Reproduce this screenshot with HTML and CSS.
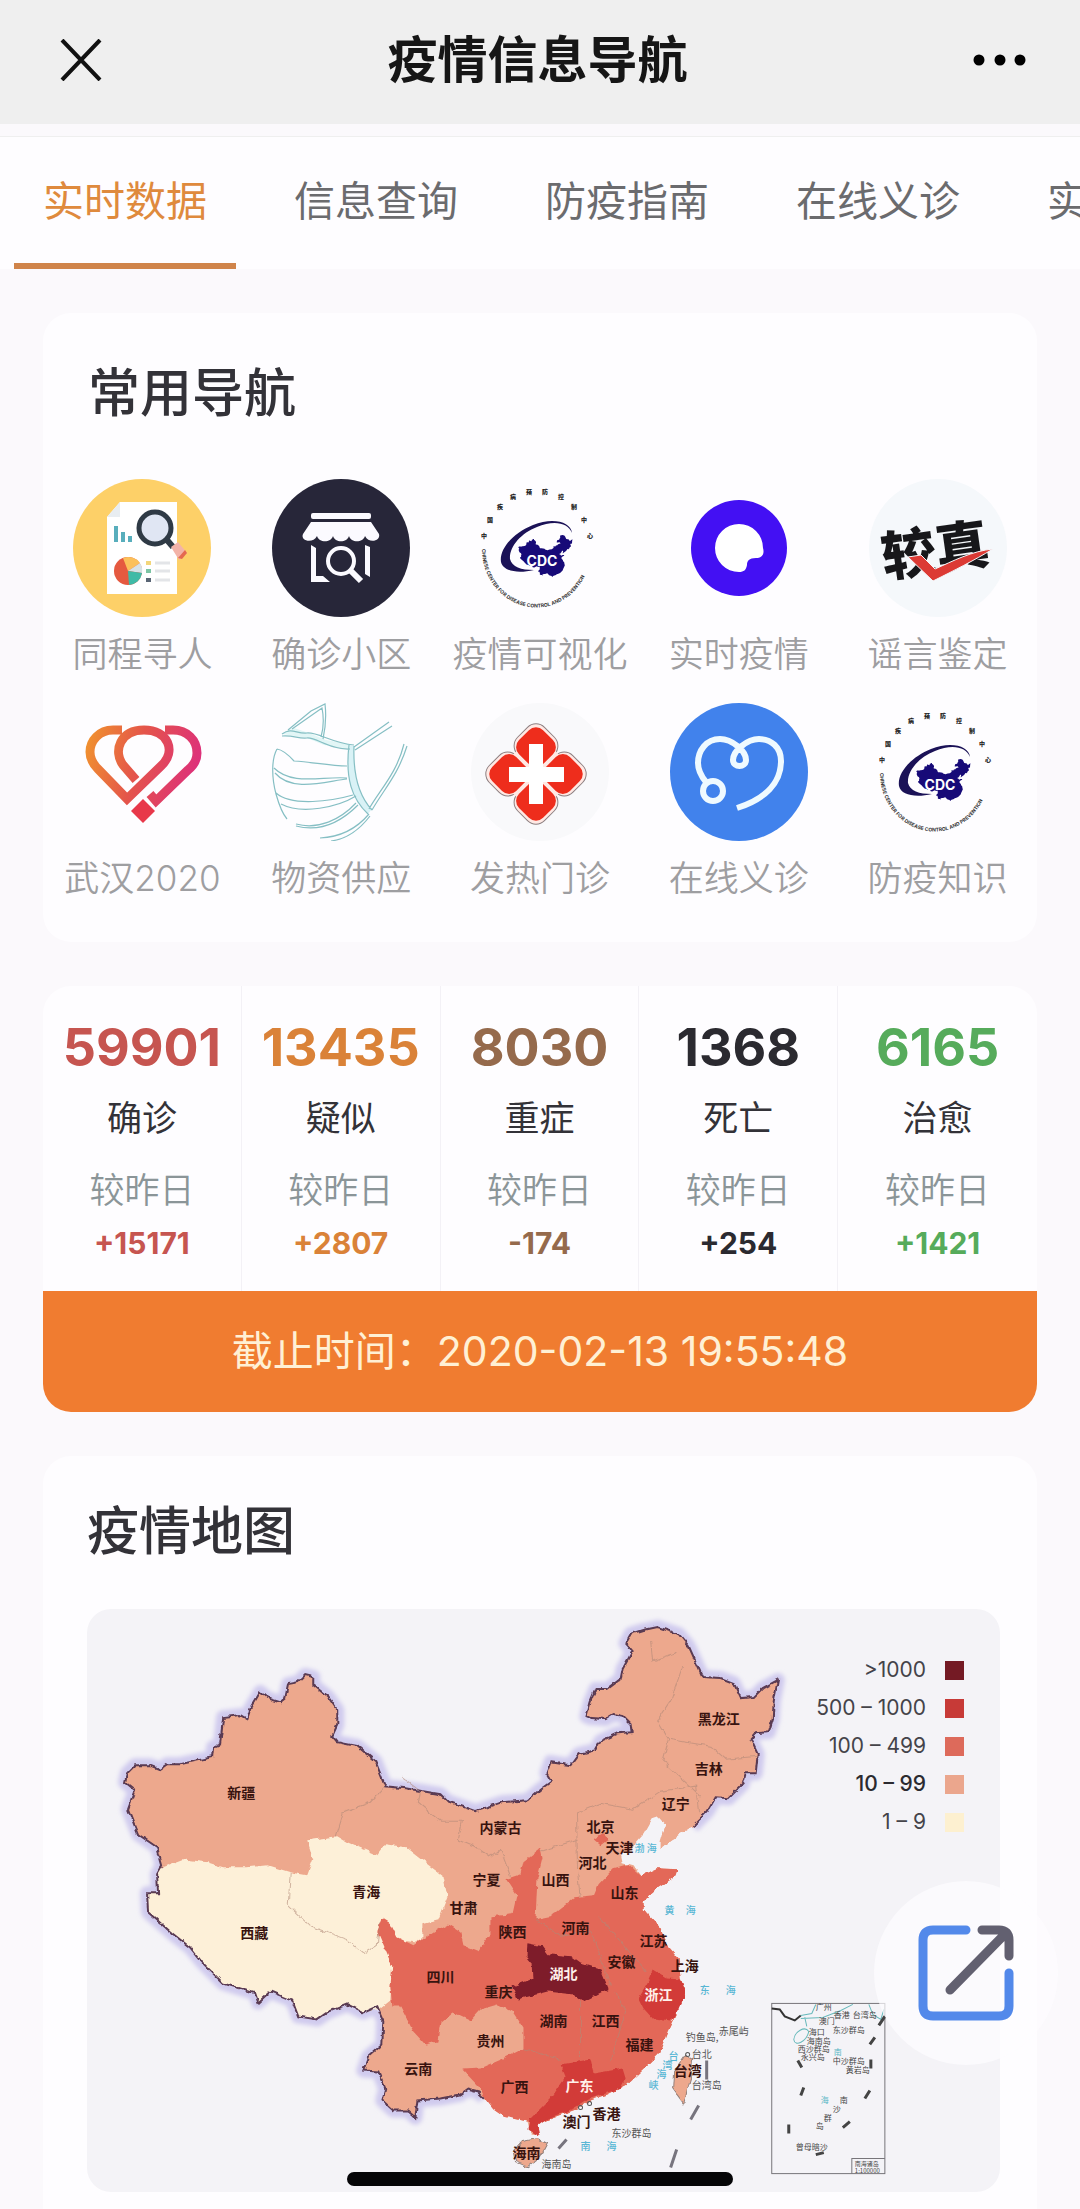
FILE: index.html
```html
<!DOCTYPE html>
<html lang="zh-CN">
<head>
<meta charset="utf-8">
<meta name="viewport" content="width=device-width, initial-scale=1">
<title>疫情信息导航</title>
<link rel="stylesheet" href="styles.css">
</head>
<body>
<svg class="defs" aria-hidden="true">
  <defs>
    <path id="china" d="M692 1825L673 1837L660 1848L660 1840L665 1823L658 1815L652 1817L643 1833L635 1842L632 1850L620 1852L622 1862L633 1865L640 1875L657 1867L677 1868L675 1875L657 1887L643 1900L643 1908L660 1927L665 1942L678 1957L680 1977L685 1990L673 2017L667 2030L658 2053L643 2068L627 2083L607 2093L587 2100L577 2107L550 2117L537 2123L538 2133L530 2132L527 2120L503 2115L493 2108L485 2098L478 2091L467 2088L460 2093L440 2097L417 2099L415 2116L407 2109L393 2109L382 2099L385 2087L378 2070L363 2069L368 2055L382 2043L383 2019L377 2005L363 2011L347 2003L327 2011L317 2018L298 2015L292 1999L270 1990L258 2001L255 1992L223 1982L202 1961L190 1946L172 1932L148 1911L147 1892L158 1892L157 1873L162 1864L157 1846L138 1833L128 1808L135 1789L125 1781L127 1772L135 1764L150 1764L160 1768L167 1763L180 1763L212 1756L213 1746L220 1743L223 1716L240 1714L247 1718L250 1708L260 1691L267 1697L280 1701L285 1697L288 1683L298 1681L305 1674L313 1676L313 1684L328 1696L337 1709L337 1724L332 1735L337 1741L357 1745L375 1760L385 1785L405 1787L440 1793L447 1800L475 1810L502 1801L527 1799L540 1788L551 1780L546 1772L550 1761L570 1764L578 1753L595 1749L600 1740L617 1732L631 1731L630 1723L622 1715L613 1713L605 1718L590 1717L586 1715L590 1700L595 1688L607 1688L620 1678L622 1668L632 1650L625 1642L630 1633L643 1629L657 1626L678 1633L688 1645L702 1676L720 1677L733 1682L740 1697L753 1696L762 1687L777 1679L773 1700L772 1718L768 1731L755 1732L750 1738L757 1753L755 1772L745 1772L742 1783L728 1797L715 1796L707 1810Z"/>
    <symbol id="cdc" viewBox="0 0 138 138">
      <g class="cdc-ring">
        <text x="13" y="59">中</text><text x="19" y="43">国</text><text x="29" y="30">疾</text><text x="42" y="20">病</text><text x="58" y="15">预</text><text x="74" y="15">防</text><text x="90" y="20">控</text><text x="103" y="30">制</text><text x="113" y="43">中</text><text x="119" y="59">心</text>
      </g>
      <path id="cdc-arc" d="M11 70A54 58 0 0 0 120 70" fill="none"/>
      <text class="cdc-en"><textPath href="#cdc-arc">CHINESE CENTER FOR DISEASE CONTROL AND PREVENTION</textPath></text>
      <path fill="#1b1257" d="M101 54C100 43 82 38 62 46C42 54 28 70 30 83C32 92 46 95 63 91C50 91 41 88 39 80C38 68 50 54 66 48C82 41 97 43 101 54Z"/>
      <use href="#china" fill="#170a78" transform="translate(37 -79) scale(.083)"/>
      <text class="cdc-name" x="71" y="87">CDC</text>
    </symbol>
    <linearGradient id="heart" gradientUnits="userSpaceOnUse" x1="14" y1="40" x2="126" y2="70">
      <stop offset="0" stop-color="#f09030"/><stop offset=".45" stop-color="#e4554a"/><stop offset="1" stop-color="#dd2f7c"/>
    </linearGradient>
    <filter id="rough" x="-5%" y="-5%" width="110%" height="110%">
      <feTurbulence type="fractalNoise" baseFrequency=".14" numOctaves="2" seed="4"/>
      <feDisplacementMap in="SourceGraphic" scale="5" xChannelSelector="R" yChannelSelector="G"/>
    </filter>
    <filter id="glow"><feGaussianBlur stdDeviation="2"/></filter>
  </defs>
</svg>

<header class="topbar">
  <button class="icon-btn" type="button" aria-label="关闭"><svg width="42" height="42" viewBox="0 0 42 42"><path d="M2 1L40 41M40 1L2 41" stroke="#111" stroke-width="4" fill="none"/></svg></button>
  <h1>疫情信息导航</h1>
  <button class="icon-btn" type="button" aria-label="更多"><svg width="54" height="12" viewBox="0 0 54 12"><circle cx="6" cy="6" r="5.5"/><circle cx="27" cy="6" r="5.5"/><circle cx="47" cy="6" r="5.5"/></svg></button>
</header>

<nav class="tabs" aria-label="栏目">
  <a class="active" href="#data">实时数据</a>
  <a href="#query">信息查询</a>
  <a href="#guide">防疫指南</a>
  <a href="#clinic">在线义诊</a>
  <a href="#live">实时动态</a>
</nav>

<main>
  <section class="card shortcuts">
    <h2>常用导航</h2>
    <ul class="grid">
      <li><a href="#find">
        <svg viewBox="0 0 138 138"><circle cx="69" cy="69" r="69" fill="#fdd068"/><path d="M47 23H104V115H34V38Z" fill="#fff"/><path d="M47 23V38H34Z" fill="#e8edf1"/><path d="M41 47h4v16h-4zM48 53h4v10h-4zM55 57h4v6h-4z" fill="#58aebc"/><circle cx="55" cy="92" r="14" fill="#e5593f"/><path d="M55 92L50 79A14 14 0 0 1 67 84Z" fill="#fbc05a"/><path d="M55 92L67 84A14 14 0 0 1 69 94Z" fill="#d7e2e6"/><path d="M55 92L69 94A14 14 0 0 1 56 106Z" fill="#3fbaa6"/><path d="M73 82h5v4h-5z" fill="#f3d67a"/><path d="M73 90h5v4h-5z" fill="#7cc4a4"/><path d="M73 99h5v4h-5z" fill="#596574"/><path d="M82 84H97M82 92H97M82 101H97" stroke="#e3e5e8" stroke-width="3"/><path d="M94 61L100 68" stroke="#2f3a45" stroke-width="6"/><path d="M98 68L105 63L114 74L106 81Z" fill="#f3b3a8"/><path d="M109 80L114 74L112 71L105 79Z" fill="#e5694f"/><circle cx="82" cy="49" r="16" fill="#e0e6f3" stroke="#2f3a45" stroke-width="5"/></svg>
        <span>同程寻人</span></a></li>
      <li><a href="#area">
        <svg viewBox="0 0 138 138"><circle cx="69" cy="69" r="69" fill="#272639"/><g fill="#fbfaff"><rect x="39" y="34" width="60" height="6" rx="2"/><path d="M39 43H99L107 55C109 62 97 65 93 57C91 64 79 64 77 57C75 64 63 64 61 57C59 64 47 64 45 57C41 65 28 62 31 55Z"/><path d="M39 66L44 69V97H51L58 103H39ZM93 66L98 68V98L93 95Z"/></g><circle cx="69" cy="82" r="13" fill="none" stroke="#fbfaff" stroke-width="4"/><path d="M78 91L89 102" stroke="#fbfaff" stroke-width="6"/></svg>
        <span>确诊小区</span></a></li>
      <li><a href="#visual"><svg viewBox="0 0 138 138"><use href="#cdc"/></svg><span>疫情可视化</span></a></li>
      <li><a href="#live">
        <svg viewBox="0 0 138 138"><circle cx="69" cy="69" r="48" fill="#4310f3"/><path d="M93 69C95 76 91 79 86 79C79 79 77 82 77 86C76 91 74 93 69 93A24 24 0 0 1 69 45A24 24 0 0 1 93 69Z" fill="#fff"/></svg>
        <span>实时疫情</span></a></li>
      <li><a href="#rumor">
        <svg viewBox="0 0 138 138"><circle cx="69" cy="69" r="69" fill="#f5f8fb"/><text class="brand" x="66" y="91" transform="rotate(-8 66 70)">较真</text><path d="M39 78L52 76L66 90C84 82 103 72 124 70C104 82 86 91 64 102Z" fill="#dc3a34" stroke="#f5f8fb" stroke-width="1"/></svg>
        <span>谣言鉴定</span></a></li>
      <li><a href="#wuhan">
        <svg viewBox="0 0 138 138"><g fill="none" stroke="url(#heart)" stroke-width="9"><path d="M49 27H40C26 27 17 38 17 49C17 56 20 61 25 66L54 96L88 63C104 48 95 27 71 27C47 27 40 48 50 62L63 77"/><path d="M92 27H100C114 27 124 37 124 50C124 58 120 63 115 67L83 98L77 91"/></g><path d="M70 96L82 108L70 120L58 108Z" fill="#e8384a"/></svg>
        <span>武汉2020</span></a></li>
      <li><a href="#supply">
        <svg viewBox="0 0 138 138"><path d="M77 42C73 76 80 96 96 111L100 106C86 92 81 70 82 43Z" fill="#d9f2f6"/><path d="M16 27L22 25L37 30L54 37L78 41V46L52 42L35 35L10 31Z" fill="#e2f6f6"/><g fill="none" stroke="#86bfc4" stroke-width="1.2"><path d="M10 31C20 24 24 31 35 30S60 40 82 42M10 33C22 32 26 36 35 35S58 47 78 46M16 27L39 8L53 1Q55 18 51 36M20 26L50 5Q53 20 49 34M77 42C73 76 80 96 96 111M82 43C81 70 86 92 100 107M82 44L117 19M83 47L120 23M97 106C107 88 125 70 132 41M100 107C112 86 126 72 135 43"/><path d="M5 46Q12 47 22 58C40 59 58 63 75 63M2 65C20 83 50 73 75 75M3 70C20 90 55 78 75 76M4 90C20 104 60 98 81 92M9 101C30 112 66 104 84 93M24 121C46 127 68 117 84 100M24 123C50 130 70 118 86 102M48 135C70 134 86 124 97 111M59 138C76 136 88 126 98 113M5 46C0 55-1 72 4 91Q9 109 15 116"/></g></svg>
        <span>物资供应</span></a></li>
      <li><a href="#fever">
        <svg viewBox="0 0 138 138"><circle cx="69" cy="69" r="69" fill="#f9f9fb"/><g transform="translate(65 71) rotate(45)"><g fill="#ffe9e4" stroke="#8c7f80"><rect x="-39" y="-39" width="38" height="38" rx="12"/><rect x="1" y="-39" width="38" height="38" rx="12"/><rect x="-39" y="1" width="38" height="38" rx="12"/><rect x="1" y="1" width="38" height="38" rx="12"/></g><rect x="-30" y="-30" width="60" height="60" fill="#ffe9e4"/><g fill="#ee2d1c"><rect x="-36" y="-36" width="34" height="34" rx="10"/><rect x="2" y="-36" width="34" height="34" rx="10"/><rect x="-36" y="2" width="34" height="34" rx="10"/><rect x="2" y="2" width="34" height="34" rx="10"/></g></g><path d="M58 41H72V64H93V79H72V101H58V79H38V64H58Z" fill="#fff"/></svg>
        <span>发热门诊</span></a></li>
      <li><a href="#clinic">
        <svg viewBox="0 0 138 138"><circle cx="69" cy="69" r="69" fill="#4182ec"/><g fill="none" stroke="#effaff" stroke-width="6"><path d="M67 105C95 96 111 80 111 58C111 44 101 36 89 36C77 36 63 48 63 57C63 65 76 65 76 57C76 48 62 36 50 36C36 36 28 48 28 60C28 68 31 73 36 79"/><circle cx="43" cy="88" r="10"/></g></svg>
        <span>在线义诊</span></a></li>
      <li><a href="#knowledge"><svg viewBox="0 0 138 138"><use href="#cdc"/></svg><span>防疫知识</span></a></li>
    </ul>
  </section>

  <section class="card stats" id="data">
    <ul>
      <li class="red"><strong>59901</strong><span>确诊</span><small>较昨日</small><em>+15171</em></li>
      <li class="orange"><strong>13435</strong><span>疑似</span><small>较昨日</small><em>+2807</em></li>
      <li class="brown"><strong>8030</strong><span>重症</span><small>较昨日</small><em>-174</em></li>
      <li class="black"><strong>1368</strong><span>死亡</span><small>较昨日</small><em>+254</em></li>
      <li class="green"><strong>6165</strong><span>治愈</span><small>较昨日</small><em>+1421</em></li>
    </ul>
    <p>截止时间：<time datetime="2020-02-13T19:55:48">2020-02-13 19:55:48</time></p>
  </section>

  <section class="card map">
    <h2>疫情地图</h2>
    <div class="panel">
      <svg viewBox="87 1608 912 582" role="img" aria-label="疫情地图">
        <use href="#china" class="halo" filter="url(#glow)"/>
        <g filter="url(#rough)">
          <use href="#china" fill="#eda88d"/>
          <path class="l0" d="M162 1866L183 1858L207 1861L223 1866L247 1866L267 1864L290 1871L307 1874L313 1858L307 1839L337 1835L347 1841L377 1854L385 1843L405 1846L423 1860L443 1875L447 1896L438 1919L422 1923L422 1942L407 1940L387 1946L392 1965L390 1999L380 2007L363 2011L347 2003L327 2011L317 2018L298 2015L292 1999L270 1990L258 2001L255 1992L223 1982L202 1961L190 1946L172 1932L148 1911L147 1892L158 1892L157 1873Z"/>
          <path class="l2" d="M382 1917L390 1922L397 1936L413 1944L437 1929L447 1923L460 1931L463 1944L478 1950L483 1943L490 1933L490 1915L512 1913L516 1895L505 1878L520 1873L523 1860L540 1847L542 1857L537 1877L535 1918L550 1915L573 1897L593 1895L598 1883L613 1867L627 1863L640 1875L657 1867L677 1868L675 1875L657 1887L643 1900L643 1908L660 1927L665 1942L678 1957L680 1977L685 1990L673 2017L667 2030L658 2053L643 2068L627 2083L607 2093L587 2100L577 2107L550 2117L537 2123L527 2120L503 2115L493 2108L485 2098L480 2087L462 2068L480 2067L503 2057L523 2047L523 2027L512 2010L497 2003L480 2008L470 2019L453 2011L440 2022L437 2040L425 2043L413 2030L400 2005L392 2005L390 1985L392 1965L377 1930Z"/>
          <path class="l4" d="M527 1942L542 1945L548 1953L570 1955L580 1962L600 1968L608 1987L583 2000L573 1993L547 1990L517 1998L512 1985L533 1977L532 1962L526 1955Z"/>
          <path class="l3" d="M653 1968L667 1977L680 1978L685 1990L678 2007L670 2020L653 2018L643 2007L638 1997L648 1980Z"/>
          <path class="l3" d="M560 2063L590 2058L593 2072L622 2067L625 2077L620 2087L587 2098L573 2107L547 2117L537 2125L539 2135L528 2128L530 2117L550 2097L565 2075Z"/>
          <path class="l2" d="M593 1838L602 1832L608 1838L600 1844Z"/>
          <path class="l1" d="M522 2140L537 2137L547 2142L540 2155L527 2165L515 2160L513 2150Z"/>
          <path class="l1" d="M685 2053L692 2057L690 2077L683 2102L672 2087L673 2070Z"/>
          <path class="lines" d="M335 1835L342 1812L370 1801L385 1785M290 1871L288 1904L310 1925L347 1938L363 1952L377 1943L380 1920M400 1775L420 1790L418 1802L440 1820L462 1820L458 1838L475 1845M475 1845L490 1856L500 1848L510 1875M580 1900L577 1870L576 1812L600 1802L632 1808L660 1790L695 1785L698 1812M682 1665L670 1700L657 1720L668 1738L662 1760L700 1795M668 1738L710 1745L725 1758L757 1755M650 1640L652 1660L675 1652M535 1918L560 1935L590 1930L598 1950L610 1985M598 1915L620 1940L645 1970M580 2000L580 2055M523 2047L560 2058M615 1990L625 2010L610 2060M540 1850L578 1838"/>
          <use href="#china" class="border"/>
        </g>
        <g class="sea-lines"><path d="M706 2059V2078M690 2118L698 2104M558 2147L566 2138M670 2166L676 2148"/></g>
        <g class="places">
          <text x="241" y="1797">新疆</text><text x="366" y="1896">青海</text><text x="254" y="1937">西藏</text><text x="440" y="1981">四川</text><text x="418" y="2073">云南</text><text x="500" y="1832">内蒙古</text><text x="600" y="1831">北京</text><text x="619" y="1852">天津</text><text x="592" y="1867">河北</text><text x="486" y="1884">宁夏</text><text x="555" y="1884">山西</text><text x="624" y="1897">山东</text><text x="718" y="1723">黑龙江</text><text x="708" y="1773">吉林</text><text x="675" y="1808">辽宁</text><text x="463" y="1912">甘肃</text><text x="512" y="1936">陕西</text><text x="575" y="1932">河南</text><text x="653" y="1945">江苏</text><text x="621" y="1966">安徽</text><text x="684" y="1970">上海</text><text x="498" y="1996">重庆</text><text x="553" y="2025">湖南</text><text x="605" y="2025">江西</text><text x="490" y="2045">贵州</text><text x="639" y="2049">福建</text><text x="514" y="2090">广西</text><text x="687" y="2075">台湾</text><text x="576" y="2125">澳门</text><text x="606" y="2117">香港</text><text x="526" y="2156">海南</text>
          <text class="on-dark" x="563" y="1978">湖北</text><text class="on-dark" x="658" y="1999">浙江</text><text class="on-dark" x="579" y="2089">广东</text>
        </g>
        <g class="isles"><text x="685" y="2040">钓鱼岛,</text><text x="718" y="2034">赤尾屿</text><text x="691" y="2057">台北</text><text x="691" y="2087">台湾岛</text><text x="611" y="2135">东沙群岛</text><text x="541" y="2166">海南岛</text></g>
        <g class="seas"><text x="634" y="1851">渤 海</text><text x="664" y="1913">黄</text><text x="685" y="1913">海</text><text x="699" y="1993">东</text><text x="725" y="1993">海</text><text x="580" y="2148">南</text><text x="606" y="2148">海</text><text x="668" y="2059">台</text><text x="662" y="2068">湾</text><text x="656" y="2077">海</text><text x="648" y="2087">峡</text></g>
        <g class="cities"><circle cx="687" cy="2053" r="2"/><circle cx="589" cy="2102" r="2"/><circle cx="580" cy="2106" r="2"/></g>
        <g class="inset">
          <rect x="771" y="2002" width="113" height="170"/>
          <path d="M771 2007L779 2008L784 2015L794 2019L800 2014" stroke="#333" stroke-width="2"/>
          <path d="M800 2014L811 2012L815 2003M804 2016L806 2025M800 2017L822 2016L840 2009L852 2003M793 2038C794 2030 804 2024 808 2030C806 2040 794 2046 793 2038M868 2003L872 2013L880 2018L883 2008" stroke="#67b9bb"/>
          <path d="M797 2059L801 2066M803 2086L800 2094M788 2123V2132M815 2153L823 2151M842 2126L849 2120M864 2097L869 2089M870 2058V2067M869 2043L874 2036M878 2024L884 2015" stroke="#444" stroke-width="3"/>
          <path d="M851 2172V2157H884"/>
        </g>
        <g class="tiny"><text x="815" y="2009">广州</text><text x="833" y="2017">香港</text><text x="852" y="2017">台湾岛</text><text x="818" y="2023">澳门</text><text x="832" y="2032">东沙群岛</text><text x="808" y="2034">海口</text><text x="806" y="2043">海南岛</text><text x="797" y="2051">西沙群岛</text><text x="800" y="2059">永兴岛</text><text x="832" y="2063">中沙群岛</text><text x="845" y="2072">黄岩岛</text><text x="839" y="2101">南</text><text x="832" y="2110">沙</text><text x="823" y="2119">群</text><text x="815" y="2127">岛</text><text x="795" y="2148">曾母暗沙</text><text class="blue" x="833" y="2054">南</text><text class="blue" x="820" y="2101">海</text><text class="scale" x="854" y="2164">南海诸岛</text><text class="scale" x="854" y="2171">1:100000</text></g>
      </svg>
      <ul class="legend">
        <li>&gt;1000<i class="k4"></i></li>
        <li>500 – 1000<i class="k3"></i></li>
        <li>100 – 499<i class="k2"></i></li>
        <li class="strong">10 – 99<i class="k1"></i></li>
        <li>1 – 9<i class="k0"></i></li>
      </ul>
    </div>
  </section>
</main>

<button class="share" type="button" aria-label="分享"><svg width="96" height="96" viewBox="0 0 96 96" fill="none" stroke-width="9" stroke-linecap="round" stroke-linejoin="round"><path d="M48 5H15Q5 5 5 15V81Q5 91 15 91H81Q91 91 91 81V48" stroke="#5389ea"/><path d="M64 5H81Q91 5 91 15V31M87 9L32 65" stroke="#626070"/></svg></button>
<div class="home-indicator"></div>
</body>
</html>
```
FILE: styles.css
```css
* { box-sizing: border-box; margin: 0; padding: 0; }
body { background: #fbf9fc; color: #333238; font-family: Inter, "Noto Sans CJK SC", sans-serif; }
ul { list-style: none; }
a { color: inherit; text-decoration: none; }
button { border: 0; background: none; }
.defs { position: absolute; width: 0; height: 0; }

.topbar { display: flex; align-items: center; justify-content: space-between; height: 124px; padding: 0 53px 4px 60px; background: #efefef; }
.topbar h1 { font-size: 50px; line-height: 60px; font-weight: 700; color: #161616; }
.icon-btn { display: flex; justify-content: center; }

.tabs { display: flex; gap: 29px; overflow: hidden; padding: 0 14px; margin-top: 12px; border-top: 1px solid #efefef; background: #fefdff; }
.tabs a { flex: none; padding: 34px 29px 32px; border-bottom: 6px solid transparent; font-size: 41px; line-height: 60px; color: #6b6b6e; }
.tabs .active { color: #df8a3d; border-color: #d0844a; }

main { display: grid; gap: 44px; padding: 44px 43px 0; }
.card { border-radius: 28px; background: #fefdff; overflow: hidden; }
.card h2 { padding-left: 45px; font-size: 52px; line-height: 52px; font-weight: 500; }

.shortcuts { padding: 55px 0 44px; }
.shortcuts h2 { margin-bottom: 59px; }
.grid { display: grid; grid-template-columns: repeat(5, 1fr); row-gap: 29px; }
.grid a { display: flex; flex-direction: column; align-items: center; gap: 17px; font-size: 35px; line-height: 40px; font-weight: 350; color: #9e9ea1; white-space: nowrap; }
.grid svg { width: 138px; height: 138px; }
.cdc-ring { font: 900 6px "Noto Sans CJK SC", sans-serif; fill: #222; text-anchor: middle; }
.cdc-en { font: 700 5px Inter, sans-serif; fill: #333; }
.cdc-name { font: 700 14px Inter, sans-serif; fill: #fff; text-anchor: middle; }
.brand { font: 900 54px "Noto Sans CJK SC", sans-serif; fill: #17171a; text-anchor: middle; }

.stats ul { display: grid; grid-template-columns: repeat(5, 1fr); }
.stats li { display: flex; flex-direction: column; align-items: center; padding: 36px 0 33px; border-right: 1px solid #f3f1f6; }
.stats li:last-child { border-right: 0; }
.stats strong { font-size: 52px; line-height: 52px; font-weight: 700; }
.stats span { margin-top: 24px; font-size: 35px; line-height: 40px; color: #333238; }
.stats small { margin-top: 32px; font-size: 35px; line-height: 40px; font-weight: 350; color: #8b9598; }
.stats em { margin-top: 19px; font-size: 30px; line-height: 29px; font-weight: 700; font-style: normal; }
.red { color: #c65550; }
.orange { color: #da8238; }
.brown { color: #956a4c; }
.black { color: #2b2a30; }
.green { color: #56ab5b; }
.stats p { padding: 30px 0 31px; background: #f07c30; color: #fff0d4; font-size: 41px; line-height: 60px; text-align: center; }

.map { padding: 50px 37px 19px 44px; border-radius: 28px 28px 0 0; }
.map h2 { padding: 0; margin-bottom: 51px; }
.panel { display: grid; border-radius: 24px; background: #f4f3f7; overflow: hidden; }
.panel > * { grid-area: 1 / 1; }
.panel svg { display: block; width: 100%; height: auto; }
.halo { fill: none; stroke: #d0cbee; stroke-width: 14; stroke-linejoin: round; stroke-dasharray: 0 650 5000 0; }
.border { fill: none; stroke: #5a3a52; stroke-width: 2; stroke-dasharray: 0 650 5000 0; }
.l0 { fill: #fdf0d8; }
.l1 { fill: #eda88d; stroke: #94817b; }
.l2 { fill: #e36858; }
.l3 { fill: #d23b38; }
.l4 { fill: #7e1d2b; }
.lines { fill: none; stroke: #b08878; stroke-opacity: .6; }
.places { font: 700 14px "Noto Sans CJK SC", sans-serif; fill: #38130f; text-anchor: middle; }
.places .on-dark { fill: #fff0ea; }
.isles { font: 400 10px "Noto Sans CJK SC", sans-serif; fill: #555; }
.seas { font: 500 10px "Noto Sans CJK SC", sans-serif; fill: #58b6d4; }
.sea-lines { fill: none; stroke: #77747e; stroke-width: 3; }
.cities { fill: none; stroke: #555; }
.inset { fill: none; stroke: #77757a; }
.tiny { font: 400 8px "Noto Sans CJK SC", sans-serif; fill: #444; }
.tiny .blue { fill: #58b6c4; }
.tiny .scale { font-size: 6px; }
.legend { justify-self: end; padding: 42px 36px 0 0; }
.legend li { display: flex; align-items: center; justify-content: flex-end; gap: 19px; font-size: 21px; line-height: 38px; color: #444349; }
.legend .strong { font-weight: 500; color: #2b2a30; }
.legend i { width: 19px; height: 19px; }
.k4 { background: #741a24; }
.k3 { background: #c73a37; }
.k2 { background: #dd6a5b; }
.k1 { background: #eba68d; }
.k0 { background: #fdf0d0; }

.share { position: fixed; right: 22px; bottom: 144px; display: grid; place-items: center; width: 184px; height: 184px; border-radius: 50%; background: rgba(254, 252, 255, .7); }
.home-indicator { position: fixed; left: 50%; bottom: 23px; width: 386px; height: 14px; margin-left: -193px; border-radius: 7px; background: #050507; }
```
